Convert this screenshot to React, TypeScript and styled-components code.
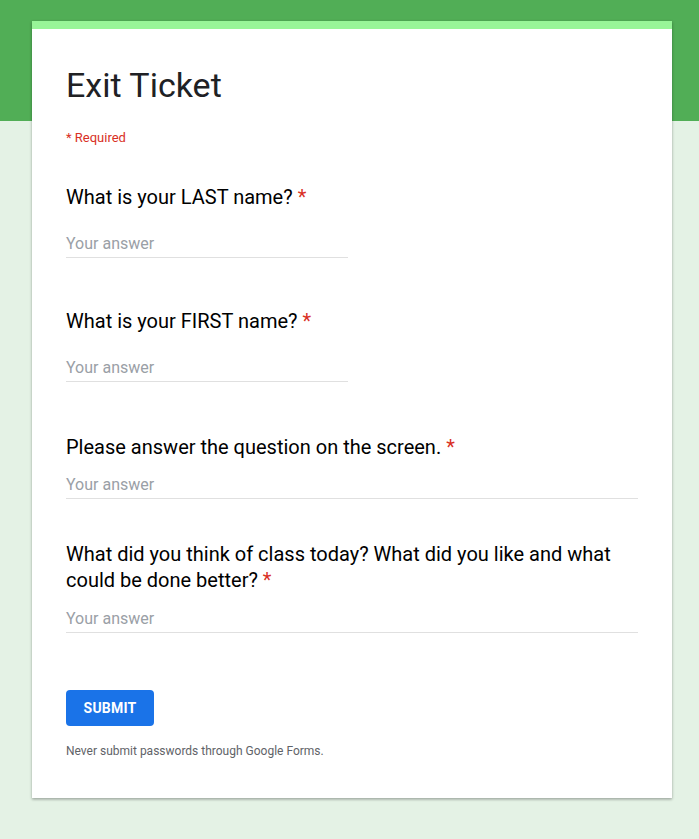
import styled, { createGlobalStyle } from "styled-components";

const GlobalStyle = createGlobalStyle`
    body {
        margin: 0;
        font-family: Roboto, "Liberation Sans", Arial, sans-serif;
    }
`;

type Question = {
    label: string;
    wide: boolean;
    gap: number;
    spacing: number;
};

const questions: Question[] = [
    { label: "What is your LAST name?", wide: false, gap: 22, spacing: 38 },
    { label: "What is your FIRST name?", wide: false, gap: 22, spacing: 50 },
    { label: "Please answer the question on the screen.", wide: true, gap: 13, spacing: 52 },
    { label: "What did you think of class today? What did you like and what could be done better?", wide: true, gap: 14, spacing: 42 },
];

function App() {
    return (
        <S.Page>
            <GlobalStyle />
            <S.Card>
                <S.Title>Exit Ticket</S.Title>
                <S.Required>* Required</S.Required>
                {questions.map((q) => (
                    <S.Item key={q.label} $spacing={q.spacing}>
                        <S.Label>
                            {q.label} <S.Star>*</S.Star>
                        </S.Label>
                        <S.Answer $wide={q.wide} $gap={q.gap}>
                            Your answer
                        </S.Answer>
                    </S.Item>
                ))}
                <S.Submit>SUBMIT</S.Submit>
                <S.Note>Never submit passwords through Google Forms.</S.Note>
            </S.Card>
        </S.Page>
    );
}

const S = {
    Page: styled.div`
        min-height: 839px;
        background: linear-gradient(#51ae56 0 121px, #e4f2e5 121px);
        padding: 21px 0 40px 32px;
        box-sizing: border-box;
    `,

    Card: styled.div`
        width: 640px;
        background: #fff;
        border-top: 8px solid #98f598;
        box-shadow: 0 1px 3px rgba(0, 0, 0, 0.25), 0 2px 2px rgba(0, 0, 0, 0.1);
        padding: 36px 34px 39px 34px;
        box-sizing: border-box;
        display: flex;
        flex-direction: column;
        align-items: flex-start;
    `,

    Title: styled.div`
        font-size: 34px;
        line-height: 40px;
        color: #202124;
    `,

    Required: styled.div`
        margin-top: 25px;
        font-size: 13px;
        line-height: 16px;
        color: #d93025;
    `,

    Item: styled.div<{ $spacing: number }>`
        margin-top: ${(p) => p.$spacing}px;
        width: 100%;
    `,

    Label: styled.div`
        font-size: 20px;
        line-height: 26px;
        color: #000;
    `,

    Star: styled.span`
        color: #d93025;
    `,

    Answer: styled.div<{ $wide: boolean; $gap: number }>`
        margin-top: ${(p) => p.$gap}px;
        width: ${(p) => (p.$wide ? "572px" : "282px")};
        font-size: 16px;
        line-height: 24px;
        color: #9aa0a6;
        border-bottom: 1px solid #e0e0e0;
        padding-bottom: 1px;
    `,

    Submit: styled.button`
        margin-top: 57px;
        width: 88px;
        height: 36px;
        border: none;
        border-radius: 4px;
        background: #1a73e8;
        color: #fff;
        font-family: Roboto, "Liberation Sans", Arial, sans-serif;
        font-size: 14px;
        font-weight: 700;
        letter-spacing: 0.2px;
        padding: 0;
    `,

    Note: styled.div`
        margin-top: 17px;
        font-size: 12px;
        line-height: 16px;
        color: #5f6368;
    `,
};

export default App;
